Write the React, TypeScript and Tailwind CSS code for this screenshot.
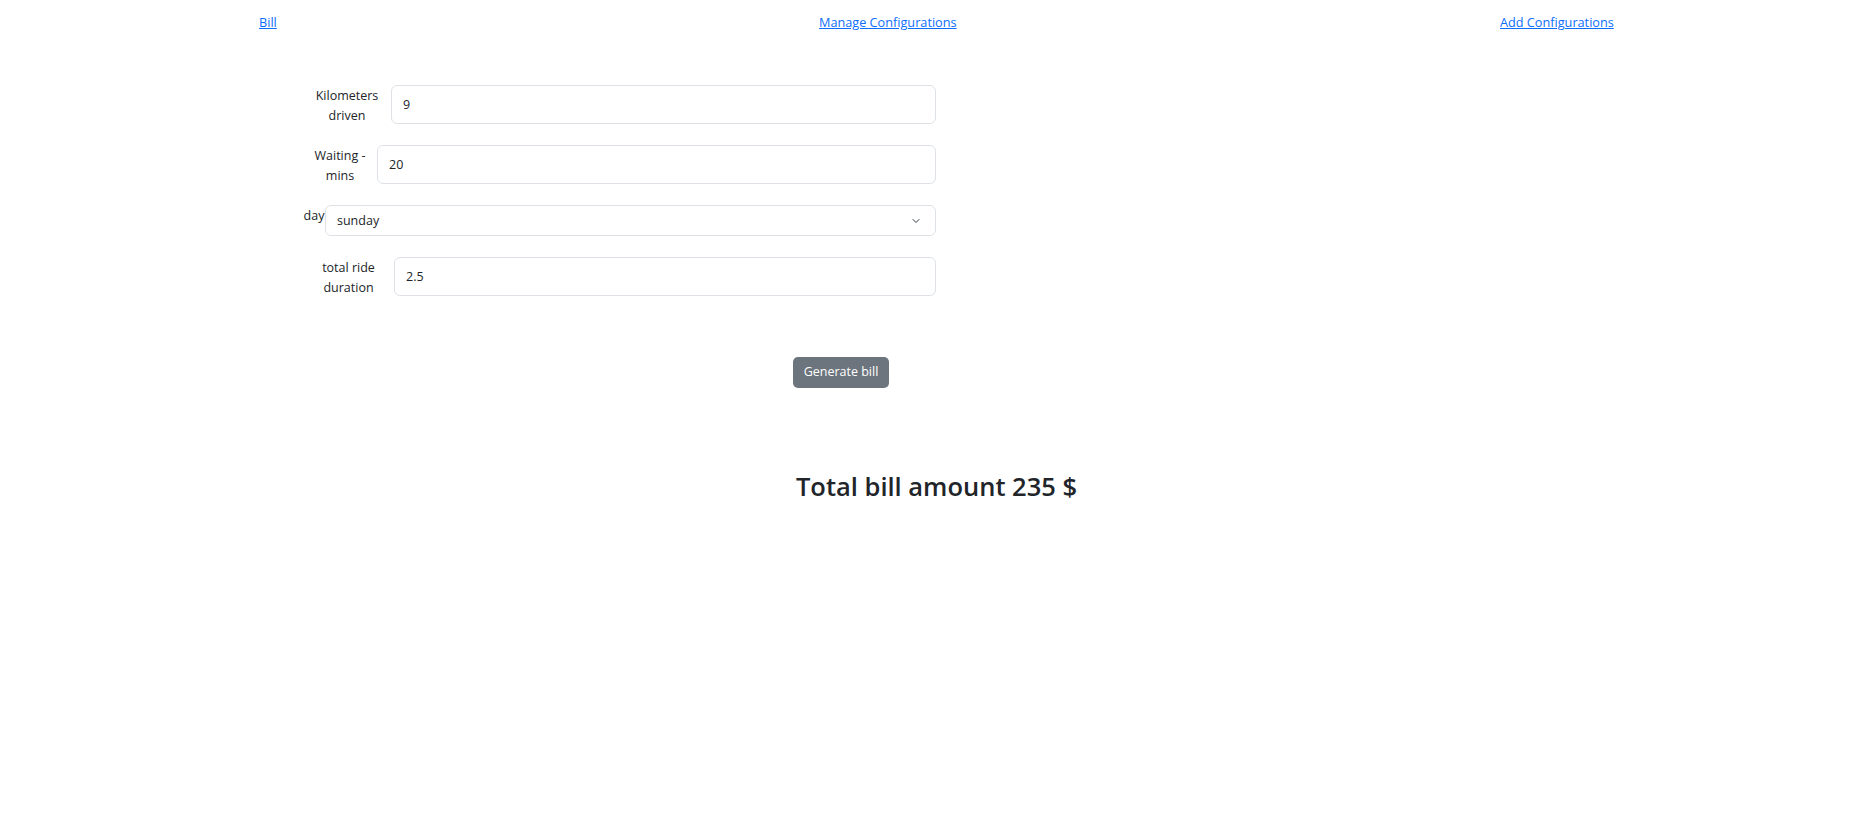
import React from "react";

function ChevronDown() {
  return (
    <svg width="10" height="8" viewBox="0 0 16 16" className="shrink-0">
      <path d="M2 5l6 6 6-6" fill="none" stroke="#343a40" strokeWidth="2" strokeLinecap="round" strokeLinejoin="round" />
    </svg>
  );
}

export default function App() {
  return (
    <div
      className="min-h-screen w-full bg-white text-[#212529]"
      style={{ fontFamily: '"Open Sans", "Noto Sans", sans-serif' }}
    >
      <nav className="grid grid-cols-[560px_681px_auto] pl-[259px] pt-[12px] text-[12.7px] leading-[20px]">
        <div>
          <a href="#" className="text-[#0d6efd] underline">Bill</a>
        </div>
        <div>
          <a href="#" className="text-[#0d6efd] underline">Manage Configurations</a>
        </div>
        <div>
          <a href="#" className="text-[#0d6efd] underline">Add Configurations</a>
        </div>
      </nav>

      <form className="ml-[303px] mt-[53px] flex w-[633px] flex-col gap-[21px] text-[12.5px]">
        <div className="flex items-start">
          <label className="h-[39px] w-[88px] shrink-0 pt-[1px] text-center leading-[19.5px]">Kilometers driven</label>
          <div className="flex h-[39px] flex-1 items-center rounded-[6px] border border-[#dee2e6] px-[11px] pt-[1px]">9</div>
        </div>
        <div className="flex items-start">
          <label className="h-[39px] w-[74px] shrink-0 pt-[1px] text-center leading-[19.5px]">Waiting - mins</label>
          <div className="flex h-[39px] flex-1 items-center rounded-[6px] border border-[#dee2e6] px-[11px] pt-[1px]">20</div>
        </div>
        <div className="flex items-start">
          <label className="h-[31px] w-[22px] shrink-0 pt-[1px] text-center leading-[20px]">day</label>
          <div className="flex h-[31px] flex-1 items-center justify-between rounded-[6px] border border-[#dee2e6] pl-[11px] pr-[14px] pt-[1px]">
            <span>sunday</span>
            <ChevronDown />
          </div>
        </div>
        <div className="flex items-start">
          <label className="h-[39px] w-[91px] shrink-0 pt-[1px] text-center leading-[19.5px]">total ride duration</label>
          <div className="flex h-[39px] flex-1 items-center rounded-[6px] border border-[#dee2e6] px-[11px] pt-[1px]">2.5</div>
        </div>
      </form>

      <div className="ml-[793px] mt-[61px]">
        <button
          type="button"
          className="flex h-[31px] w-[96px] items-center justify-center rounded-[5px] bg-[#6c757d] text-[12.5px] text-white"
        >
          Generate bill
        </button>
      </div>

      <h3 className="mt-[82px] pl-[19px] text-center text-[25.5px] font-semibold leading-[32px]">
        Total bill amount 235 $
      </h3>
    </div>
  );
}
